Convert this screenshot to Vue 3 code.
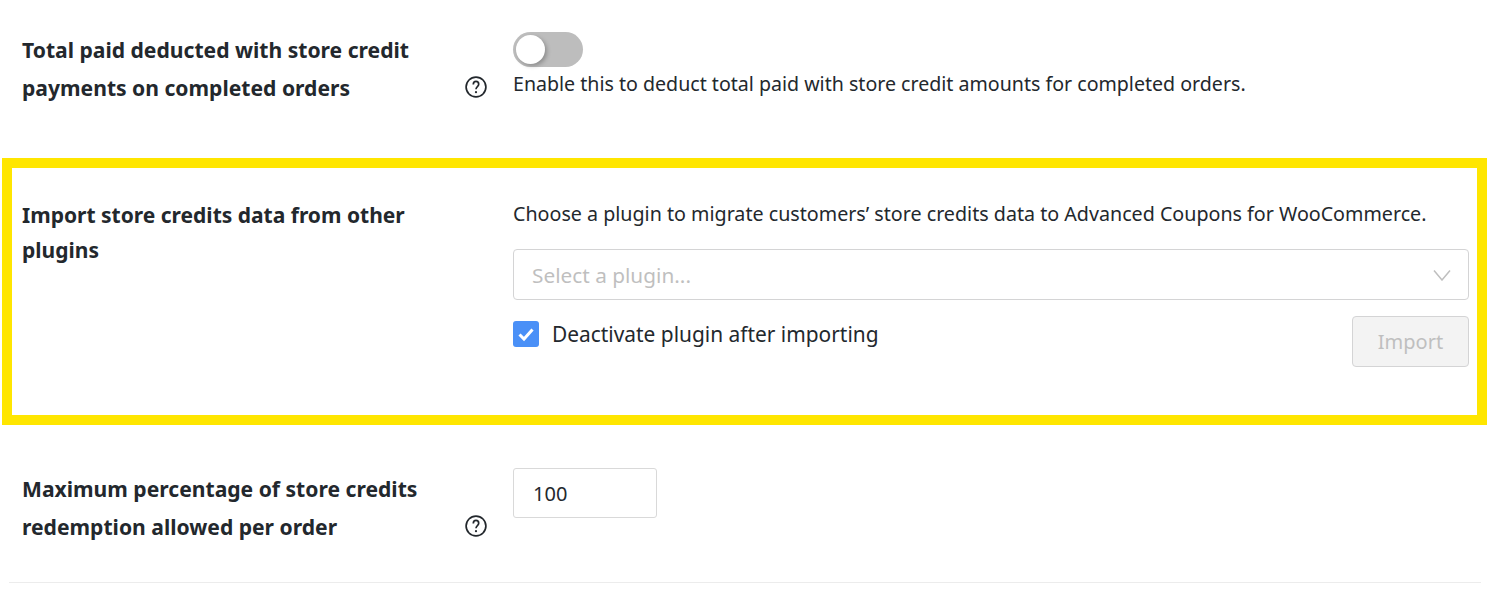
<template>
  <div class="page">
    <section class="setting-row first">
      <div class="setting-label">
        <span class="label-text">Total paid deducted with store credit payments on completed orders</span>
        <svg class="help-icon" viewBox="0 0 22 22" aria-hidden="true">
          <circle cx="11" cy="11" r="9.900" />
          <path d="M8.300 8.600c0-1.800 1.100-3.200 2.700-3.200s2.700 1.200 2.700 2.800c0 2.400-2.700 2.400-2.700 5.100" />
          <circle class="dot" cx="11" cy="16.200" r="1.100" />
        </svg>
      </div>
      <div class="setting-field">
        <div class="toggle"><span class="toggle-knob"></span></div>
        <p class="desc toggle-desc">Enable this to deduct total paid with store credit amounts for completed orders.</p>
      </div>
    </section>

    <section class="highlight">
      <div class="setting-label plain">
        <span class="label-text">Import store credits data from other plugins</span>
      </div>
      <div class="setting-field">
        <p class="desc wide">Choose a plugin to migrate customers’ store credits data to Advanced Coupons for WooCommerce.</p>
        <div class="select">
          <span>Select a plugin...</span>
          <svg class="chevron" viewBox="0 0 18 12" aria-hidden="true"><path d="M1 1.500 9 11 17 1.500" /></svg>
        </div>
        <div class="import-row">
          <label class="check">
            <span class="check-box">
              <svg viewBox="0 0 26 26" aria-hidden="true"><path d="M6.500 13.500 11 18 19.500 8.500" /></svg>
            </span>
            Deactivate plugin after importing
          </label>
          <button class="import-btn" disabled>Import</button>
        </div>
      </div>
    </section>

    <section class="setting-row last">
      <div class="setting-label">
        <span class="label-text">Maximum percentage of store credits redemption allowed per order</span>
        <svg class="help-icon" viewBox="0 0 22 22" aria-hidden="true">
          <circle cx="11" cy="11" r="9.900" />
          <path d="M8.300 8.600c0-1.800 1.100-3.200 2.700-3.200s2.700 1.200 2.700 2.800c0 2.400-2.700 2.400-2.700 5.100" />
          <circle class="dot" cx="11" cy="16.200" r="1.100" />
        </svg>
      </div>
      <div class="setting-field">
        <input class="number-input" type="text" value="100" />
      </div>
    </section>
    <hr class="divider" />
  </div>
</template>

<script setup>
</script>

<style scoped>
.page {
  width: 1494px;
  height: 602px;
  overflow: hidden;
  background: #fff;
  color: #23282d;
  font-family: "Noto Sans", "Open Sans", sans-serif;
  font-size: 20px;
}

.setting-row {
  display: flex;
  margin: 0 25px 0 22px;
}

.first {
  padding-top: 31px;
  height: 158px;
  box-sizing: border-box;
}

.last {
  padding-top: 45px;
  height: 157px;
  box-sizing: border-box;
}

.setting-label {
  width: 491px;
  flex-shrink: 0;
  display: flex;
  align-items: flex-end;
  align-self: flex-start;
  box-sizing: border-box;
  padding-right: 26px;
  height: 76px;
}

.setting-label.plain {
  height: auto;
  margin-top: -2px;
  padding-right: 80px;
}

.label-text {
  flex: 1;
  font-size: 21.100px;
  font-weight: 700;
  line-height: 38px;
  color: #23282d;
}

.plain .label-text {
  font-size: 21px;
  line-height: 35px;
}

.help-icon {
  width: 22px;
  height: 22px;
  margin-bottom: 9px;
  fill: none;
  stroke: #23282d;
  stroke-width: 1.700;
}

.help-icon .dot {
  fill: #23282d;
  stroke: none;
}

.setting-field {
  flex: 1;
  min-width: 0;
}

.toggle {
  width: 70px;
  height: 35px;
  margin-top: 1px;
  border-radius: 18px;
  background: #bdbdbd;
  display: flex;
  align-items: center;
  padding-left: 3px;
  box-sizing: border-box;
}

.toggle-knob {
  width: 29px;
  height: 29px;
  border-radius: 50%;
  background: #fff;
  box-shadow: 2px 2px 4px rgba(0, 0, 0, 0.25);
}

.desc {
  margin: 0;
  font-size: 19.600px;
  line-height: 28px;
}

.desc.wide {
  font-size: 19.680px;
}

.toggle-desc {
  margin-top: 3px;
}

.highlight {
  margin: 0 7px 0 2px;
  height: 267px;
  box-sizing: border-box;
  border: 10px solid #ffe600;
  padding: 32px 8px 0 10px;
  display: flex;
}

.select {
  margin-top: 21px;
  height: 51px;
  box-sizing: border-box;
  border: 1px solid #d4d4d5;
  border-radius: 4px;
  padding: 0 17px 0 18px;
  display: flex;
  align-items: center;
  justify-content: space-between;
  color: #bfbfbf;
  font-size: 20.800px;
}

.chevron {
  width: 18px;
  height: 12px;
  fill: none;
  stroke: #bfbfbf;
  stroke-width: 1.500;
}

.import-row {
  display: flex;
  justify-content: space-between;
  align-items: flex-start;
  margin-top: 16px;
}

.check {
  display: flex;
  align-items: center;
  gap: 13px;
  margin-top: 5px;
  line-height: 26px;
  font-size: 20.900px;
}

.check-box {
  width: 26px;
  height: 26px;
  border-radius: 3px;
  background: #4a90f7;
  display: flex;
}

.check-box svg {
  width: 26px;
  height: 26px;
  fill: none;
  stroke: #fff;
  stroke-width: 3;
}

.import-btn {
  width: 117px;
  height: 51px;
  box-sizing: border-box;
  border: 1px solid #d4d4d5;
  border-radius: 4px;
  background: #f3f3f3;
  color: #bfbfbf;
  font: inherit;
}

.number-input {
  display: block;
  width: 144px;
  height: 50px;
  margin-top: -2px;
  box-sizing: border-box;
  border: 1px solid #d9d9d9;
  border-radius: 3px;
  padding: 0 19px;
  font: inherit;
  color: #23282d;
  outline: none;
}

.divider {
  margin: 0 13px 0 9px;
  border: 0;
  border-top: 1px solid #ececec;
}
</style>
